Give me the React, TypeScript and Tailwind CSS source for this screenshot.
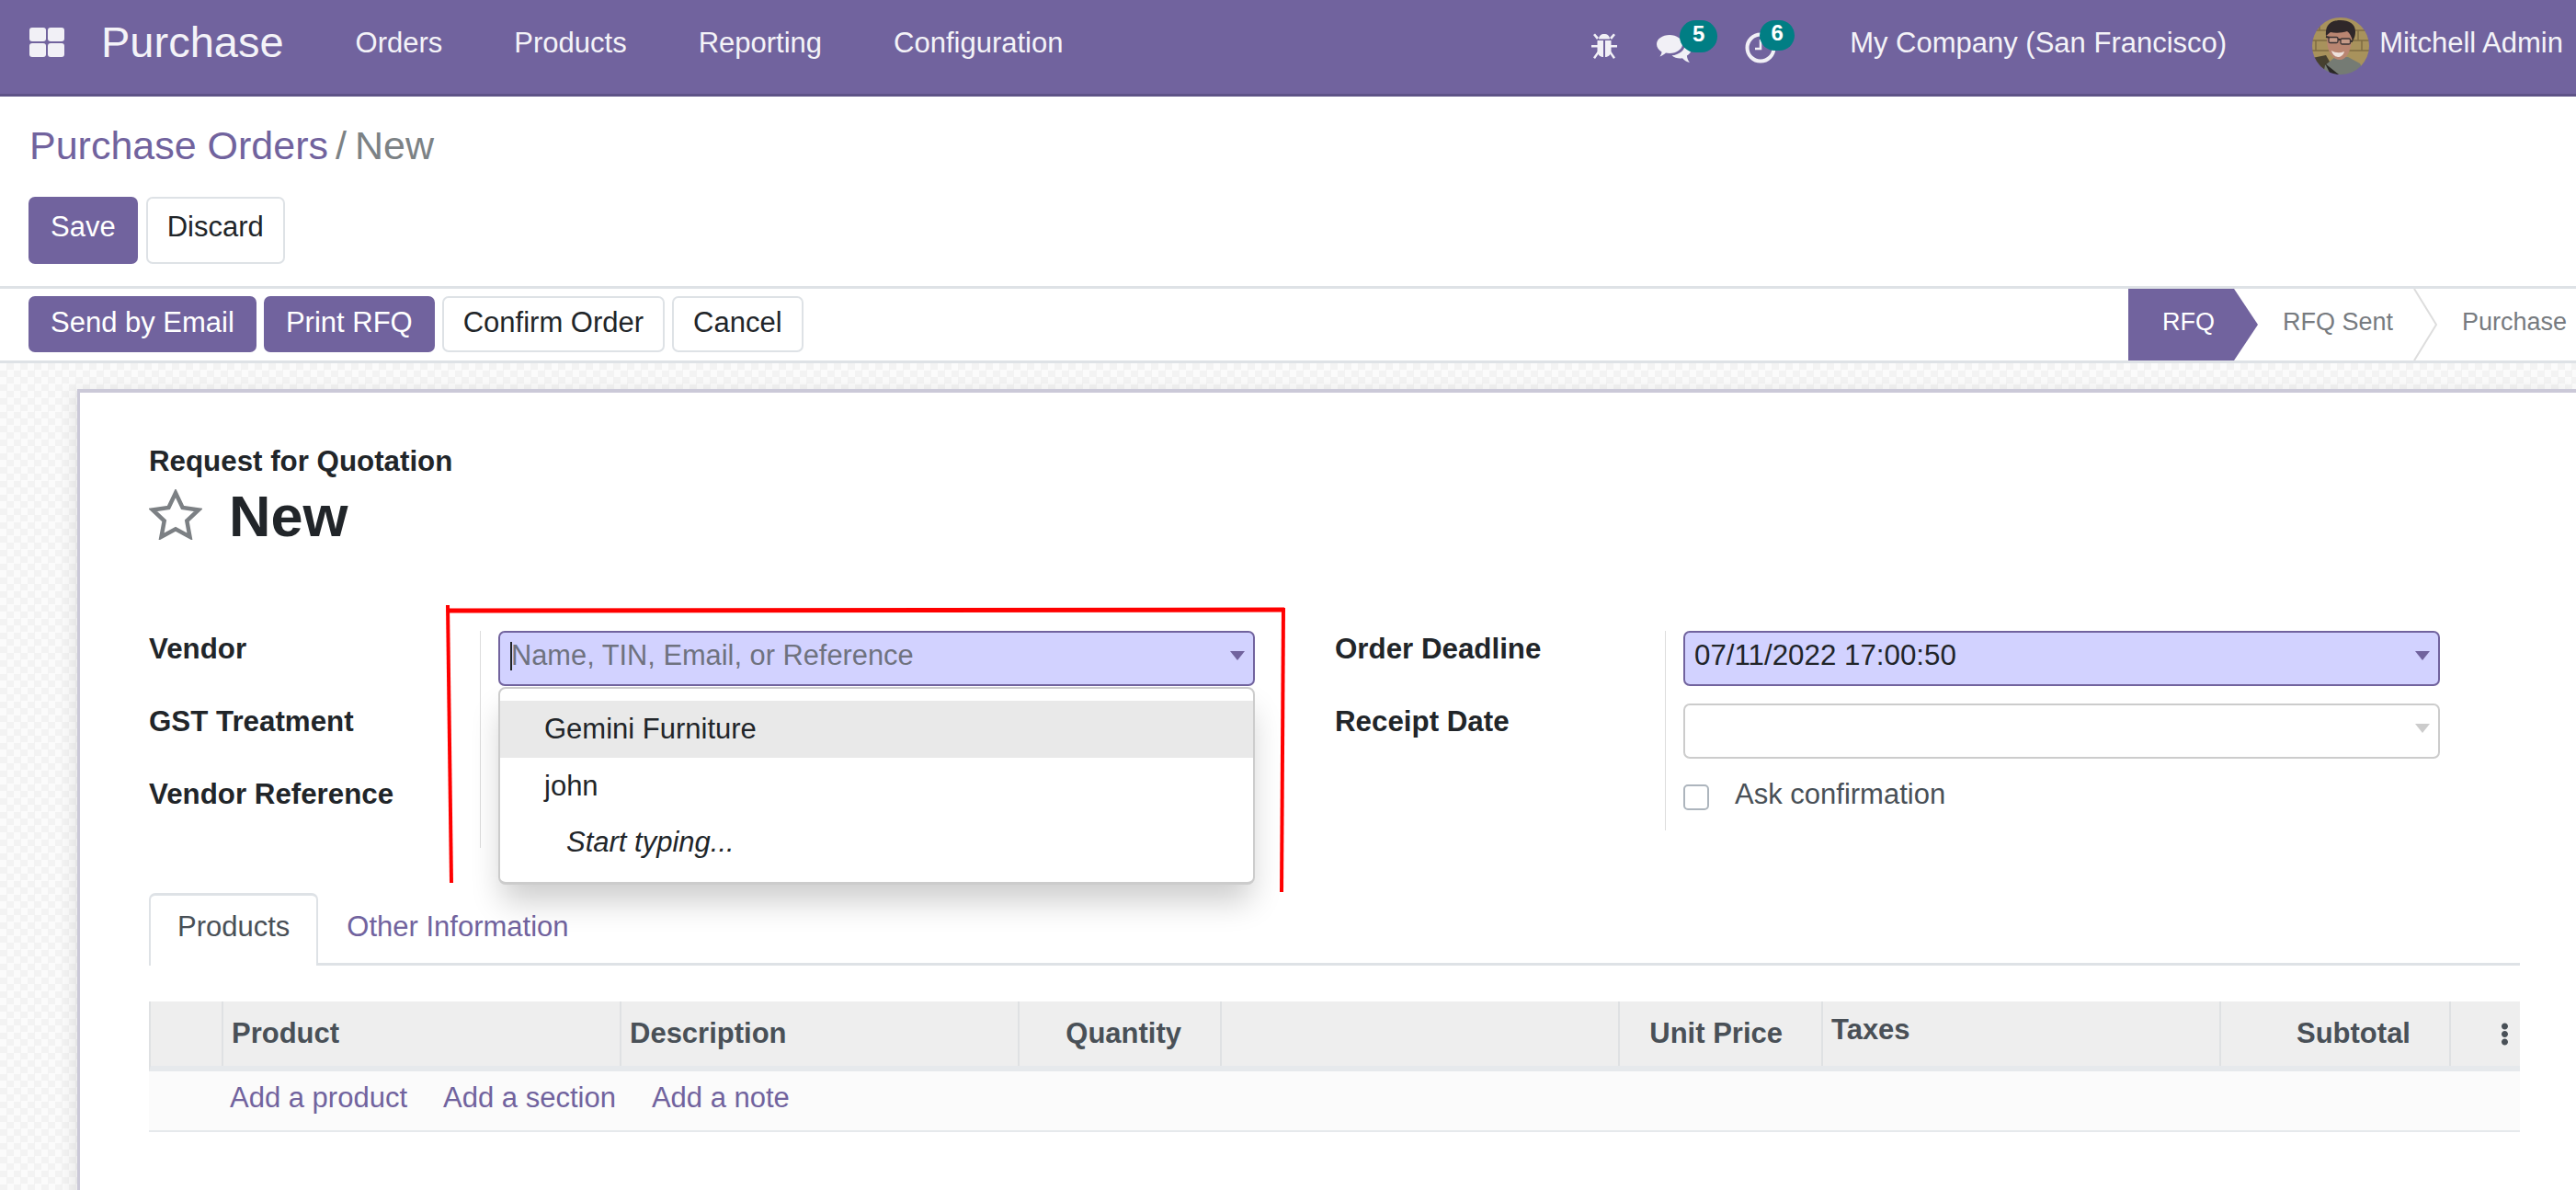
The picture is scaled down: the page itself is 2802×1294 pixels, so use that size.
import { FaEllipsisV } from "react-icons/fa";

const purple = "#71639e";

function AppsIcon() {
  return (
    <svg width="38" height="32" viewBox="0 0 38 32" fill="#f1f0f6">
      <rect x="0" y="0" width="18" height="15" rx="3" />
      <rect x="20" y="0" width="18" height="15" rx="3" />
      <rect x="0" y="17" width="18" height="15" rx="3" />
      <rect x="20" y="17" width="18" height="15" rx="3" />
    </svg>
  );
}

function BugIcon() {
  return (
    <svg width="28" height="28" viewBox="0 0 28 28" fill="#f1f0f6">
      <path d="M8 6.5C8 3 10.5 1 14 1s6 2 6 5.5z" />
      <path d="M6.5 8h6.5v18c-3.500 0-6.500-2.500-6.500-7zM15 8h6.500v11c0 4.500-3 7-6.500 7z" />
      <path d="M2 2l2-1.500 4 4.500-2 2zM26 2l-2-1.500-4 4.500 2 2z" />
      <path d="M0 13h7v2.500H0zM21 13h7v2.500h-7z" />
      <path d="M2 26.500l5-7 1.500 2-4.500 6.500zM26 26.500l-5-7-1.500 2 4.500 6.500z" />
    </svg>
  );
}

function ChatIcon() {
  return (
    <svg width="38" height="31" viewBox="0 0 38 31" fill="#f1f0f6">
      <path d="M14 0c7.700 0 14 4.400 14 10s-6.300 10-14 10c-1.400 0-2.700-.1-4-.4C8 21.400 6 22.800 3.500 23.500c1-1.500 1.800-3 2-5C2.200 16.600 0 13.500 0 10 0 4.400 6.300 0 14 0z" />
      <path d="M31 8c4 1.600 6.500 4.400 6.500 7.700 0 2.800-1.900 5.300-4.600 6.900.2 2.900 1.300 5.300 3 7.400-3.300-.8-6-2.500-8-4.800-4 .6-8.500-.3-11.400-3C24 22 32 16.500 31 8z" />
    </svg>
  );
}

function ClockIcon() {
  return (
    <svg width="34" height="34" viewBox="0 0 34 34" fill="none" stroke="#f1f0f6">
      <circle cx="17" cy="17" r="14.500" strokeWidth="4" />
      <path d="M17 8v10h-6" strokeWidth="2.500" />
    </svg>
  );
}

function Avatar() {
  return (
    <div className="w-[62px] h-[62px] shrink-0 rounded-full overflow-hidden">
      <svg width="62" height="62" viewBox="0 0 62 62" className="blur-[0.7px]">
        <rect width="62" height="62" fill="#a8925c" />
        <path d="M0 14h62M0 25h62M0 36h62M8 3v11M50 14v11M4 25v11M54 25v11" stroke="#7f6c42" strokeWidth="1.500" />
        <path d="M0 44l15-3 12 21H0z" fill="#46402f" />
        <path d="M14 52l11-9h14l13 7 6 12H12z" fill="#757b74" />
        <path d="M14 50l15 12h-9z" fill="#2a2826" />
        <path d="M16 22c0-13 5-16 14-16 10 0 14 6 13 18-1 14-6 22-13 22-9 0-14-10-14-24z" fill="#b98571" />
        <path d="M15 20C14 9 19 3 31 3c9 0 16 4 16 12 0 5-1 7-3 11-1-5-3-9-6-11-6 2-13 2-18 1-2 1-3 3-5 4z" fill="#2f2729" />
        <path d="M15 21l12 2.500 3 .5 14 2" stroke="#2f2a2b" strokeWidth="1.800" fill="none" />
        <rect x="18" y="21.500" width="10" height="6" rx="1.500" fill="#c59a88" stroke="#3a3233" strokeWidth="1.300" />
        <rect x="31" y="23" width="10.500" height="6" rx="1.500" fill="#c59a88" stroke="#3a3233" strokeWidth="1.300" />
        <path d="M21 36c4 2.500 9 3 14 1-1 4-4 6-7 6s-6-3-7-7z" fill="#efe2dc" />
      </svg>
    </div>
  );
}

function Star() {
  return (
    <svg width="58" height="55" viewBox="0 0 58 55" fill="none" stroke="#7c8084" strokeWidth="4.500" className="-mt-[3px]">
      <path d="M29 4l7.600 16 17.400 2.400-12.700 12 3.200 17.300L29 43.300l-15.500 8.400 3.200-17.300L4 22.400 21.400 20z" />
    </svg>
  );
}

function Caret({ color }: { color: string }) {
  return (
    <svg width="16" height="10" viewBox="0 0 16 10" fill={color}>
      <path d="M0 0h16l-8 10z" />
    </svg>
  );
}

function PrimaryButton({ label, high }: { label: string; high?: boolean }) {
  return (
    <button className={`${high ? "h-[73px] pb-[6px]" : "h-[61px] pb-[2px]"} px-[24px] rounded-[7px] bg-[#71639e] text-white text-[31px]`}>
      {label}
    </button>
  );
}

function SecondaryButton({ label, high }: { label: string; high?: boolean }) {
  return (
    <button className={`${high ? "h-[73px] pb-[6px]" : "h-[61px] pb-[2px]"} px-[21px] rounded-[7px] border-2 border-[#dee2e6] bg-white text-[#212529] text-[31px]`}>
      {label}
    </button>
  );
}

function HeaderCell({ label, width, align, raised }: { label?: string; width: string; align?: "right"; raised?: boolean }) {
  return (
    <div className={`${width} shrink-0 h-full border-r-2 border-[#dfe1e3] flex items-center ${align === "right" ? "justify-end pr-[42px]" : "pl-[9px]"} ${raised ? "pb-[8px]" : ""}`}>
      {label}
    </div>
  );
}

export default function App() {
  return (
    <div className="relative w-[2802px] h-[1294px] overflow-hidden flex flex-col bg-white text-[31px] text-[#212529] font-['Liberation_Sans',Arial,sans-serif]">
      {/* top bar */}
      <nav className="h-[105px] shrink-0 flex items-center pb-[8px] pl-[32px] pr-[14px] bg-[#71639e] border-b-[3px] border-[#5e5387] text-[#f4f3f8]">
        <div className="-mt-[3px]">
          <AppsIcon />
        </div>
        <div className="ml-[40px] flex items-center gap-[78px]">
          <span className="text-[47px] -mt-[2px]">Purchase</span>
          <span>Orders</span>
          <span>Products</span>
          <span>Reporting</span>
          <span>Configuration</span>
        </div>
        <div className="ml-auto flex items-center">
          <div className="mt-[6px]">
            <BugIcon />
          </div>
          <div className="relative ml-[43px] mt-[12px]">
            <ChatIcon />
            <span className="absolute left-[25px] top-[-16px] w-[41px] h-[35px] rounded-full bg-[#017e84] text-white text-[24px] font-bold leading-[30px] text-center">5</span>
          </div>
          <div className="relative ml-[58px] mt-[10px]">
            <ClockIcon />
            <span className="absolute left-[16px] top-[-13px] w-[38px] h-[33px] rounded-full bg-[#017e84] text-white text-[24px] font-bold leading-[28px] text-center">6</span>
          </div>
          <span className="ml-[80px]">My Company (San Francisco)</span>
          <div className="ml-[93px] mt-[5px] flex items-center">
            <Avatar />
          </div>
          <span className="ml-[11px]">Mitchell Admin</span>
        </div>
      </nav>

      {/* breadcrumb and main buttons */}
      <header className="h-[209px] shrink-0 pl-[31px] pt-[28px] border-b-[3px] border-[#dee2e6]">
        <div className="ml-[1px] h-[50px] flex items-center text-[43px] leading-[50px]">
          <span className="text-[#71639e]">Purchase Orders</span>
          <span className="ml-[8px] text-[#7c8285]">/</span>
          <span className="ml-[9px] text-[#7c8285]">New</span>
        </div>
        <div className="mt-[31px] flex gap-[9px]">
          <PrimaryButton label="Save" high />
          <SecondaryButton label="Discard" high />
        </div>
      </header>

      {/* statusbar */}
      <div className="h-[81px] shrink-0 flex pl-[31px] border-b-[3px] border-[#dee2e6]">
        <div className="pt-[8px] flex gap-[8px] h-fit">
          <PrimaryButton label="Send by Email" />
          <PrimaryButton label="Print RFQ" />
          <SecondaryButton label="Confirm Order" />
          <SecondaryButton label="Cancel" />
        </div>
        <div className="ml-auto relative w-[487px] shrink-0 text-[27px] text-[#777b80]">
          <div className="absolute left-0 top-0 h-[78px] pb-[6px] flex items-center">
            <svg width="141" height="78" viewBox="0 0 141 78" fill={purple} className="absolute left-0 top-0">
              <path d="M0 0h115l26 39-26 39H0z" />
            </svg>
            <svg width="26" height="78" viewBox="0 0 26 78" fill="none" stroke="#dddddd" strokeWidth="2" className="absolute left-[310px] top-0">
              <path d="M1 0l24 39-24 39" />
            </svg>
            <span className="relative ml-[37px] text-white">RFQ</span>
            <span className="relative ml-[74px] whitespace-nowrap">RFQ Sent</span>
            <span className="relative ml-[75px] whitespace-nowrap">Purchase</span>
          </div>
        </div>
      </div>

      {/* sheet */}
      <main className="flex-1 min-h-0 pl-[84px] pt-[28px] bg-[repeating-conic-gradient(#f3f3f3_0_25%,#fbfbfb_0_50%)] bg-[length:15px_15px]">
        <div className="h-[900px] pl-[75px] pr-[61px] pt-[53px] bg-white border-l-[3px] border-t-[4px] border-[#cbc9d8] shadow-[-6px_0_16px_rgba(0,0,0,0.07)]">
          <div className="font-bold leading-[44px] text-[31.3px]">Request for Quotation</div>
          <div className="mt-[6px] h-[62px] flex items-center">
            <Star />
            <span className="ml-[29px] text-[63px] font-bold leading-[62px]">New</span>
          </div>

          <div className="mt-[94px] h-[285px] flex">
            <div className="w-[1290px] shrink-0 flex">
              <div className="w-[360px] shrink-0 pt-[1px] flex flex-col gap-[41px] font-bold text-[31.3px] leading-[38px]">
                <div>Vendor</div>
                <div>GST Treatment</div>
                <div>Vendor Reference</div>
              </div>
              <div className="h-[236px] pl-[19px] border-l-[1px] border-[#dddddd]">
                <div className="relative w-[823px] h-[60px]">
                  <div className="h-full flex items-center justify-between pl-[11px] pr-[9px] pb-[6px] rounded-[7px] bg-[#d2d2ff] border-[2px] border-[#71639e]">
                    <div className="flex items-center text-[#6f727f] text-[30.8px]">
                      <span className="w-[2px] h-[31px] -mr-[1px] bg-[#212529]" />
                      <span>Name, TIN, Email, or Reference</span>
                    </div>
                    <Caret color={purple} />
                  </div>
                  <div className="absolute left-0 top-[61px] w-full h-[215px] pt-[13px] rounded-[8px] bg-white border-2 border-b-[3px] border-[#cccccc] shadow-[0_22px_34px_-4px_rgba(0,0,0,0.2)]">
                    <div className="h-[62px] pl-[48px] pt-[1px] flex items-center bg-[#e9e9e9]">Gemini Furniture</div>
                    <div className="h-[61px] pl-[48px] pt-[1px] flex items-center">john</div>
                    <div className="h-[61px] pl-[72px] pt-[1px] flex items-center italic">Start typing...</div>
                  </div>
                </div>
              </div>
            </div>
            <div className="flex">
              <div className="w-[359px] shrink-0 pt-[1px] flex flex-col gap-[41px] font-bold text-[31.3px] leading-[38px]">
                <div>Order Deadline</div>
                <div>Receipt Date</div>
              </div>
              <div className="h-[217px] pl-[19px] border-l-[1px] border-[#dddddd] flex flex-col">
                <div className="w-[823px] h-[60px] flex items-center justify-between pl-[10px] pr-[9px] pb-[6px] rounded-[7px] bg-[#d2d2ff] border-[2px] border-[#71639e]">
                  <span className="text-[31.3px]">07/11/2022 17:00:50</span>
                  <Caret color={purple} />
                </div>
                <div className="mt-[19px] w-[823px] h-[60px] flex items-center justify-end pr-[9px] pb-[6px] rounded-[7px] bg-white border-[2px] border-[#cccccc]">
                  <Caret color="#cccccc" />
                </div>
                <div className="mt-[28px] flex">
                  <span className="w-[28px] h-[28px] rounded-[5px] border-2 border-[#adb5bd]" />
                  <span className="ml-[28px] -mt-[9px] leading-[40px] text-[#495057]">Ask confirmation</span>
                </div>
              </div>
            </div>
          </div>

          {/* tabs */}
          <div className="h-[79px] flex items-start border-b-[3px] border-[#dee2e6]">
            <div className="h-[79px] px-[29px] pt-[12px] leading-[44px] bg-white border-2 border-t-[3px] border-b-0 border-[#dee2e6] rounded-t-[7px] text-[#495057]">Products</div>
            <div className="ml-[31px] pt-[15px] leading-[44px] text-[#71639e]">Other Information</div>
          </div>

          {/* order lines */}
          <div className="mt-[39px] h-[76px] flex border-l-2 border-[#dfe1e3] border-b-[6px] border-b-[#e6e9ec] bg-[#eeeeee] font-bold text-[#495057]">
            <HeaderCell width="w-[79px]" />
            <HeaderCell width="w-[433px]" label="Product" />
            <HeaderCell width="w-[433px]" label="Description" />
            <HeaderCell width="w-[220px]" label="Quantity" align="right" />
            <HeaderCell width="w-[433px]" />
            <HeaderCell width="w-[221px]" label="Unit Price" align="right" />
            <HeaderCell width="w-[433px]" label="Taxes" raised />
            <HeaderCell width="w-[250px]" label="Subtotal" align="right" />
            <div className="flex-1 flex items-center pl-[46px]">
              <FaEllipsisV size={25} />
            </div>
          </div>
          <div className="h-[66px] flex items-center pl-[88px] pb-[6px] gap-[39px] bg-[#fbfbfb] border-b-2 border-[#e6e9ec] text-[#71639e]">
            <span>Add a product</span>
            <span>Add a section</span>
            <span>Add a note</span>
          </div>
        </div>
      </main>

      {/* red annotation drawn over the screenshot */}
      <svg width="2802" height="1294" viewBox="0 0 2802 1294" fill="none" stroke="#ff0000" strokeWidth="4" className="absolute left-0 top-0 pointer-events-none">
        <path d="M487 658l4 302" />
        <path d="M486 664l911-1" strokeWidth="5" />
        <path d="M1396 661l-2 309" />
      </svg>
    </div>
  );
}
